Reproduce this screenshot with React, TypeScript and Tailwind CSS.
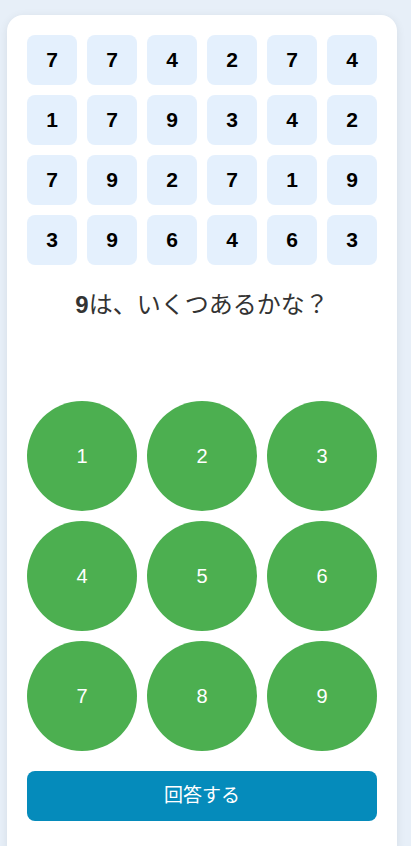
import { useState } from "react";

const grid = [
    [7, 7, 4, 2, 7, 4],
    [1, 7, 9, 3, 4, 2],
    [7, 9, 2, 7, 1, 9],
    [3, 9, 6, 4, 6, 3],
];

export default function App() {
    const [picked, setPicked] = useState<number | null>(null);

    return (
        <div className="min-h-[846px] bg-[#e7eff8] pt-[15px] font-['Liberation_Sans','Noto_Sans_CJK_JP',sans-serif]">
            <div className="ml-[7px] w-[390px] rounded-[16px] bg-white p-5 pb-10 shadow-[0_2px_10px_rgba(0,0,0,0.08)]">
                <div className="flex flex-col gap-[10px]">
                    {grid.map((row, i) => (
                        <div key={i} className="flex gap-[10px]">
                            {row.map((n, j) => (
                                <div key={j} className="flex h-[50px] w-[50px] items-center justify-center rounded-[8px] bg-[#e4f0fd] text-[21px] font-bold text-black">
                                    {n}
                                </div>
                            ))}
                        </div>
                    ))}
                </div>

                <p className="mt-[24px] text-center text-[24px] leading-[32px] text-[#333]">
                    <span className="font-bold">9</span>は、いくつあるかな？
                </p>

                <div className="mt-[80px] grid grid-cols-3 gap-[10px]">
                    {[1, 2, 3, 4, 5, 6, 7, 8, 9].map((n) => (
                        <button
                            key={n}
                            onClick={() => setPicked(n)}
                            className={`flex h-[110px] w-[110px] items-center justify-center rounded-full text-[20px] text-white ${picked === n ? "bg-[#388e3c]" : "bg-[#4caf50]"}`}
                        >
                            {n}
                        </button>
                    ))}
                </div>

                <button className="mt-5 h-[50px] w-full rounded-[8px] bg-[#058bbb] text-[19px] text-white">
                    回答する
                </button>
            </div>
        </div>
    );
}
